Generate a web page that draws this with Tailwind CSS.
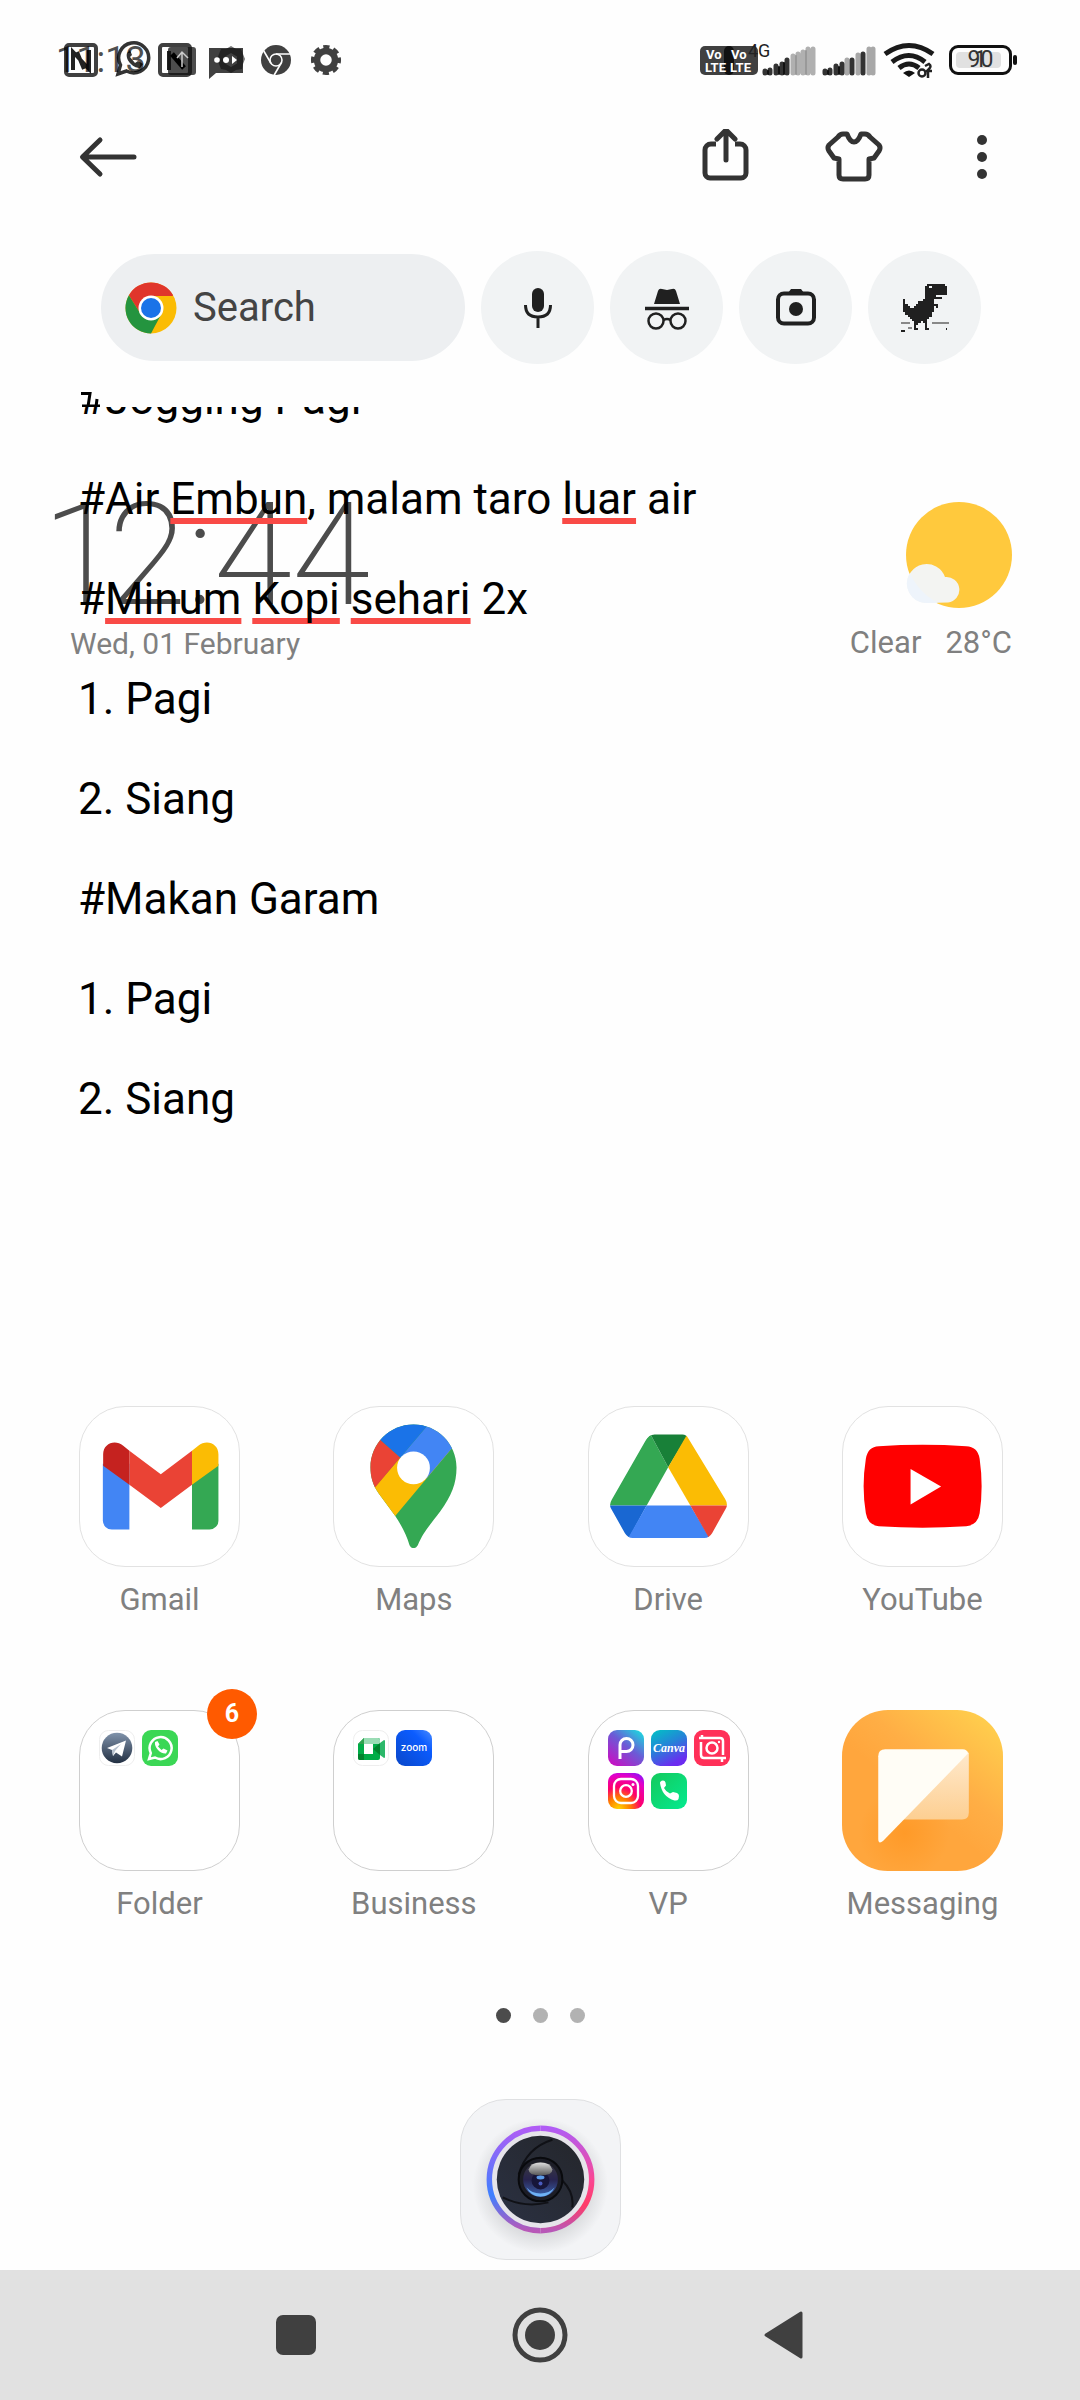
<!DOCTYPE html>
<html lang="id">
<head>
<meta charset="utf-8">
<meta name="viewport" content="width=device-width, initial-scale=1">
<title>Notes and home screen</title>
<script src="https://cdn.jsdelivr.net/npm/@tailwindcss/browser@4"></script>
</head>
<body class="bg-[#fefefe] font-['Roboto',sans-serif] text-black">
<div class="flex min-h-screen flex-col overflow-hidden">

  <!-- Status bar -->
  <header class="flex h-20 items-end justify-between pr-[68px] pl-14">
    <div class="relative flex h-10 items-center">
      <svg class="h-10 w-[290px]" viewBox="-2 0 290 40" aria-hidden="true">
        <g fill="none" stroke="#404040" stroke-width="4">
          <rect x="8" y="5" width="30" height="30" rx="3"/>
          <rect x="102" y="5" width="30" height="30" rx="3"/>
        </g>
        <g fill="none" stroke="#222" stroke-width="4">
          <path d="M15 30V12L31 29V10M19 12l7 17"/>
          <path d="M111 30V11"/>
        </g>
        <path d="M60 34l2.500-9a15 15 0 1 1 6 6z" fill="none" stroke="#333" stroke-width="3.500"/>
        <path d="M69 13c-2 6 5 15 13 15l3-4-5-3-3 2-5-6 2-2-2-5z" fill="#333"/>
        <rect x="110" y="7" width="28" height="28" rx="3" fill="#111" fill-opacity=".75"/>
        <path d="M114 14l12 14" stroke="#000" stroke-width="5"/>
        <path d="M124 27V13m-5 5l5-6 6 6" fill="none" stroke="#ccc" stroke-width="1.500"/>
        <path d="M151 8h34v25h-27l-7 6z" fill="#404040"/>
        <path d="M173 6l5 3h5l2 5 2 5-2 5-1 5-6 1-5 3-5-3-5-1-2-5-2-5 2-5 2-5h5z" fill="#111" fill-opacity=".6"/>
        <path d="M173 13l6 3.500v7l-6 3.500-6-3.500v-7z" fill="#404040"/>
        <g fill="#fff"><circle cx="159" cy="20" r="2.800"/><circle cx="168" cy="20" r="3"/><path d="M174 16l5 4-5 4z"/></g>
        <circle cx="218" cy="20" r="15" fill="#404040"/>
        <g fill="none" stroke="#fefefe" stroke-width="1.600"><circle cx="218" cy="20" r="6"/><path d="M218 14h14M212.800 23l-7-12M223.200 23l-7 12"/></g>
        <circle cx="268" cy="20" r="9" fill="none" stroke="#404040" stroke-width="6.500"/>
        <circle cx="268" cy="20" r="12.800" fill="none" stroke="#404040" stroke-width="4.500" stroke-dasharray="6 4.050" stroke-dashoffset="3"/>
      </svg>
      <span class="absolute left-0 text-[36px] leading-10 text-black/70">11:13</span>
    </div>
    <div class="flex h-10 items-center gap-[3px]">
      <svg class="h-10 w-[250px]" viewBox="0 0 250 40" aria-hidden="true">
        <rect x="4" y="6" width="58" height="29" rx="5" fill="#404040"/>
        <rect x="28" y="6" width="10" height="29" rx="5" fill="#111"/>
        <g fill="#fff" font-family="Roboto, sans-serif" font-weight="700" font-size="13">
          <text x="10" y="19">Vo</text><text x="35" y="19">Vo</text>
          <text x="9" y="32">LTE</text><text x="34" y="32">LTE</text>
        </g>
        <text x="52" y="17" font-family="Roboto, sans-serif" font-size="18" fill="#222">4G</text>
        <g stroke-linecap="round">
          <g stroke="#b0b0b0" stroke-width="5"><path d="M97 16v17M102 14v19M107 12v21M112 9v24M117 9v24"/></g>
          <g stroke="#999" stroke-width="2"><path d="M100 16v18M110 11v23"/></g>
          <g stroke="#333" stroke-width="5"><path d="M69 31v2M74 30v3M80 26v7M86 24v9M91 20v13"/></g>
          <g stroke="#111" stroke-width="2"><path d="M72 31v3M83 27v7M88 23v11"/></g>
        </g>
        <g stroke-linecap="round">
          <g stroke="#a8a8a8" stroke-width="5"><path d="M151 20v13M162 15v18M173 9v24M177 9v24"/></g>
          <g stroke="#333" stroke-width="5"><path d="M129 31v2M134 30v3M140 26v7M146 24v9M156 20v13M167 14v19"/></g>
          <g stroke="#111" stroke-width="2"><path d="M132 31v3M143 27v7"/></g>
        </g>
        <g fill="none" stroke="#1a1a1a" stroke-width="5">
          <path d="M189 14q24-17 48 0"/><path d="M196 22q17-13 33 0"/><path d="M203 28q10-8 20 0"/>
        </g>
        <path d="M207 33q6-5 12 0l-6 4z" fill="#111"/>
        <g fill="none" stroke="#222" stroke-width="2.500"><circle cx="226" cy="33" r="3.500"/><path d="M229 26l4-2q3 2 0 5l-2 2h5M232 38v-6"/></g>
      </svg>
      <div class="relative flex h-[30px] w-[63px] items-center justify-center rounded-[9px] border-[3px] border-[#111] text-[23px] leading-7 text-[#333]">
        <span class="absolute inset-x-1 inset-y-1 right-2 rounded-sm bg-[#e1e1e1]"></span>
        <span class="relative">90</span>
        <span class="absolute text-[23px]">1</span>
        <span class="absolute -right-2 h-[10px] w-1 rounded bg-[#111]"></span>
      </div>
    </div>
  </header>

  <!-- Note toolbar -->
  <nav class="flex h-[154px] items-center justify-between pr-[68px] pl-[78px] text-[#333]" aria-label="Note">
    <button type="button" aria-label="Back">
      <svg class="h-14 w-[60px]" viewBox="0 0 60 56" fill="none" stroke="currentColor" stroke-width="5" stroke-linecap="round" stroke-linejoin="round"><path d="M56 28H5M22 11L4.500 28 22 45"/></svg>
    </button>
    <div class="flex items-center gap-[68px]">
      <button type="button" aria-label="Share">
        <svg class="h-14 w-[60px]" viewBox="0 0 60 56" fill="none" stroke="currentColor" stroke-width="5" stroke-linecap="round" stroke-linejoin="round"><path d="M20 15h-5a6 6 0 0 0-6 6v23a5 5 0 0 0 5 5h31a5 5 0 0 0 5-5V21a6 6 0 0 0-6-6h-5" stroke-linecap="butt"/><path d="M30 31V2M21 10l9-9 9 9"/></svg>
      </button>
      <button type="button" aria-label="Theme">
        <svg class="h-14 w-[60px]" viewBox="0 0 60 56" fill="none" stroke="currentColor" stroke-width="5" stroke-linejoin="round"><path d="M19 5h4q3 8 7 8t7-8h4q3 0 5 3l9 8q2 3 0 6l-5 7-5 1v16q0 4-4 4H19q-4 0-4-4V30l-5-1-5-7q-2-3 0-6l9-8q2-3 5-3z"/></svg>
      </button>
      <button type="button" aria-label="More">
        <svg class="h-14 w-[60px]" viewBox="0 0 60 56" fill="currentColor"><circle cx="30" cy="11" r="5"/><circle cx="30" cy="28" r="5"/><circle cx="30" cy="45" r="5"/></svg>
      </button>
    </div>
  </nav>

  <!-- Browser search widget -->
  <section class="mt-[17px] flex items-center gap-4 pr-[99px] pl-[101px] text-[#202020]" aria-label="Search">
    <button type="button" class="flex h-[107px] flex-1 items-center gap-4 rounded-full bg-[#edeff1] pl-6 text-left text-[40px] leading-[52px] text-[#444]">
      <svg class="size-[52px]" viewBox="0 0 52 52" aria-hidden="true">
        <circle cx="26" cy="26" r="25.500" fill="#fbbc04"/>
        <path d="M26 26L15.600 32 3.900 13.200A25.500 25.500 0 0 1 48.100 13.200L47.500 14H26z" fill="#e0352b"/>
        <path d="M3.900 13.200L15.600 32 26 38 36.400 32 26 51.500A25.500 25.500 0 0 1 3.900 13.200z" fill="#24943f"/>
        <circle cx="26" cy="26" r="12.500" fill="#fff"/><circle cx="26" cy="26" r="10" fill="#1a73e8"/>
      </svg>
      <span>Search</span>
    </button>
    <button type="button" aria-label="Voice search" class="flex size-[113px] items-center justify-center rounded-full bg-[#f1f3f4]">
      <svg class="size-12" viewBox="0 0 48 48"><rect x="18" y="4" width="12" height="24" rx="6" fill="currentColor"/><path d="M11.500 21q0 12 12.500 12t12.500-12M24 33v11" fill="none" stroke="currentColor" stroke-width="3"/></svg>
    </button>
    <button type="button" aria-label="Incognito" class="flex size-[113px] items-center justify-center rounded-full bg-[#f1f3f4]">
      <svg class="size-12" viewBox="0 0 48 48"><path d="M11 20l4-13q1-3 4-2l5 1 5-1q3-1 4 2l4 13z" fill="currentColor"/><path d="M2 24.500h44" stroke="currentColor" stroke-width="3.500"/><g fill="none" stroke="currentColor" stroke-width="2.500"><circle cx="13" cy="37" r="7.500"/><circle cx="35" cy="37" r="7.500"/><path d="M20.500 36q3.500-2 7 0"/></g></svg>
    </button>
    <button type="button" aria-label="Lens" class="flex size-[113px] items-center justify-center rounded-full bg-[#f1f3f4]">
      <svg class="size-12" viewBox="0 0 48 48"><path d="M16 9l3-4h10l3 4z" fill="currentColor"/><rect x="6" y="9.500" width="36" height="30" rx="6" fill="none" stroke="currentColor" stroke-width="4"/><circle cx="24" cy="25" r="7" fill="currentColor"/></svg>
    </button>
    <button type="button" aria-label="Dino game" class="flex size-[113px] items-center justify-center rounded-full bg-[#f1f3f4]">
      <svg class="size-12" viewBox="-1 0 22 22" shape-rendering="crispEdges" stroke="currentColor" fill="none">
        <path d="M11 .5h8M10 1.500h2M13 1.500h7M10 2.500h10M10 3.500h10M10 4.500h10M10 5.500h5M10 6.500h8M0 7.500h1M9 7.500h5M0 8.500h1M7 8.500h7M0 9.500h2M6 9.500h10M0 10.500h3M5 10.500h9M15 10.500h1M0 11.500h14M0 12.500h14M1 13.500h12M2 14.500h11M3 15.500h9M4 16.500h7M5 17.500h3M9 17.500h2M5 18.500h2M10 18.500h1M5 19.500h1M10 19.500h1M5 20.500h2M10 20.500h2"/>
        <path d="M-1 18h4M13 18h8M2 20h2" stroke="#888"/><path d="M-1 21.500h2M19.500 20.800h.5"/>
      </svg>
    </button>
  </section>

  <!-- Note text, with the clock and weather widget sharing the same area -->
  <main class="mt-7 grid flex-1 content-start">
    <section class="col-start-1 row-start-1 flex items-start justify-between pt-[94px] pr-[68px] pl-[70px] text-[30px] leading-9 text-[#808080]" aria-label="Clock and weather">
      <div>
        <time class="-ml-6 block text-[142px] leading-[140px] font-extralight text-[#4c4c4c] proportional-nums">12:44</time>
        <p>Wed, 01 February</p>
      </div>
      <div class="flex flex-col items-end gap-[17px] pt-4">
        <svg class="size-[106px]" viewBox="0 0 106 106" aria-hidden="true"><circle cx="53" cy="53" r="53" fill="#ffc93d"/><path d="M20 101a19.500 19.500 0 1 1 19-26 12.500 12.500 0 1 1 3 25.500z" fill="#f3f4f2"/><path d="M4 71a19.500 19.500 0 0 0 16 30h12Q12 90 4 71z" fill="#eef4fb"/></svg>
        <p class="flex gap-6 text-[31px]"><span>Clear</span><span>28°C</span></p>
      </div>
    </section>
    <article class="z-10 col-start-1 row-start-1 px-[78px] text-[44px] leading-[100px]">
      <svg class="h-[15px] w-6" viewBox="0 0 24 15" fill="none" stroke="#000" stroke-width="3" aria-hidden="true"><path d="M3 1.500h9l-2 13M19 7l-1 8M4 14h18"/></svg>
      <div class="flex h-[42px] items-end overflow-hidden"><p>#Jogging Pagi</p></div>
      <p>#Air <span class="underline decoration-[#f94a46] decoration-[6px] underline-offset-[4px] [text-decoration-skip-ink:none]">Embun</span>, malam taro <span class="underline decoration-[#f94a46] decoration-[6px] underline-offset-[4px] [text-decoration-skip-ink:none]">luar</span> air</p>
      <p>#<span class="underline decoration-[#f94a46] decoration-[6px] underline-offset-[4px] [text-decoration-skip-ink:none]">Minum</span> <span class="underline decoration-[#f94a46] decoration-[6px] underline-offset-[4px] [text-decoration-skip-ink:none]">Kopi</span> <span class="underline decoration-[#f94a46] decoration-[6px] underline-offset-[4px] [text-decoration-skip-ink:none]">sehari</span> 2x</p>
      <p>1. Pagi</p>
      <p>2. Siang</p>
      <p>#Makan Garam</p>
      <p>1. Pagi</p>
      <p>2. Siang</p>
    </article>
  </main>

  <!-- App grid -->
  <section class="flex flex-col gap-[92px] pr-[77px] pl-[79px] text-[31px] leading-9 text-[#808080]" aria-label="Apps">
    <div class="flex justify-between">
      <a href="#" class="flex w-[161px] flex-col items-center gap-[15px]">
        <span class="size-[161px] rounded-[46px] border border-[#e2e2e2] bg-white">
          <svg viewBox="0 1 160 160" aria-hidden="true">
            <path d="M23 58h26.700v66.300H32a9 9 0 0 1-9-9z" fill="#4285f4"/>
            <path d="M112.700 70l26.600-12v57a9 9 0 0 1-9 9.300h-17.600z" fill="#34a853"/>
            <path d="M49.700 45l31.600 23.700L112.700 45v34.300l-31.400 23.400L49.700 79.300z" fill="#ea4335"/>
            <path d="M23.300 60V48.500C23.300 38 35 33 43.500 40l6.200 5v34.300z" fill="#c5221f"/>
            <path d="M139.300 60V48.500C139.300 38 127.600 33 119 40l-6.300 5v34.300z" fill="#fbbc04"/>
          </svg>
        </span>
        <span>Gmail</span>
      </a>
      <a href="#" class="flex w-[161px] flex-col items-center gap-[15px]">
        <span class="size-[161px] rounded-[46px] border border-[#e2e2e2] bg-white">
          <svg viewBox="0 1 160 160" aria-hidden="true">
            <clipPath id="pin"><path d="M80 18.700C104 18.700 123.300 38 123.300 62 123.300 78 118 91 107 106 94 123 90 127 84.300 140 82 144 78 144 76 140 73 130 68 120 61.300 110.300L45 88C39 80 36.700 71 36.700 62 36.700 38 56 18.700 80 18.700z"/></clipPath>
            <g clip-path="url(#pin)">
              <path d="M0 0h160v160H0z" fill="#34a853"/>
              <path d="M0 160L30 94.500 66.700 51.700 118 43.300 62 110.300 50 125z" fill="#fbbc04"/>
              <path d="M30 19.500L66.700 51.700 30 95.500z" fill="#ea4335"/>
              <path d="M92.700 21L100 0h60L118 43.300 93 73 66.700 51.700z" fill="#4285f4"/>
              <path d="M30 19.500V0h80L92.700 21 66.700 51.700z" fill="#1a73e8"/>
            </g>
            <circle cx="80" cy="62.300" r="16.500" fill="#fff"/>
          </svg>
        </span>
        <span>Maps</span>
      </a>
      <a href="#" class="flex w-[161px] flex-col items-center gap-[15px]">
        <span class="size-[161px] rounded-[46px] border border-[#e2e2e2] bg-white">
          <svg viewBox="0 1 160 160" aria-hidden="true">
            <clipPath id="drv"><path d="M66 28.700h28q4 0 6 4l37 61q3 5 1 9l-14 25q-3 5-8 5H44q-5 0-8-5L22 103q-2-4 1-9L58 33q2-4 8-4.300z"/></clipPath>
            <g clip-path="url(#drv)">
              <path d="M62 28.700L79.700 61.700 58 100H15V80z" fill="#34a853"/>
              <path d="M59.500 24h43L79.700 61.700z" fill="#188038"/>
              <path d="M98.700 28.700L145 100h-43L79.700 61.700z" fill="#fbbc04"/>
              <path d="M15 100h43l-20 37z" fill="#1967d2"/>
              <path d="M58 100h44l22 37H37z" fill="#4285f4"/>
              <path d="M102 100h43l-23 35z" fill="#ea4335"/>
            </g>
          </svg>
        </span>
        <span>Drive</span>
      </a>
      <a href="#" class="flex w-[161px] flex-col items-center gap-[15px]">
        <span class="size-[161px] rounded-[46px] border border-[#e2e2e2] bg-white">
          <svg viewBox="0 1 160 160" aria-hidden="true"><path d="M36 40.500Q80 37.500 124 40.500 135.500 41 137.500 53 141.500 81 137.500 108 135.500 120 124 121 80 124 36 121 25 120 23 108 18.500 81 23 53 25 41 36 40.500z" fill="#f00"/><path d="M68 63.300L98.700 81 68 99z" fill="#fff"/></svg>
        </span>
        <span>YouTube</span>
      </a>
    </div>

    <div class="flex justify-between">
      <a href="#" class="relative flex w-[161px] flex-col items-center gap-[15px]">
        <span class="grid size-[161px] grid-cols-[repeat(3,36px)] content-start gap-[7px] rounded-[46px] border border-[#cfcfcf] bg-white p-[19px]">
          <svg class="size-9" viewBox="0 0 36 36" aria-hidden="true"><defs><linearGradient id="tg" x2="0" y2="1"><stop stop-color="#8093ab"/><stop offset="1" stop-color="#222f42"/></linearGradient></defs><rect x=".5" y=".5" width="35" height="35" rx="9" fill="#fff" stroke="#eee"/><circle cx="18" cy="18" r="15.300" fill="url(#tg)"/><path d="M8 18l19-7.500-4 16-6-4-3 3.500-1-6z" fill="#fff"/><path d="M13 20l9-6-6 7-2 5z" fill="#b8c2cf"/></svg>
          <svg class="size-9" viewBox="0 0 36 36" aria-hidden="true"><rect width="36" height="36" rx="9" fill="#3bd755"/><path d="M7 29l1.800-6A11 11 0 1 1 13 27.500z" fill="none" stroke="#fff" stroke-width="2.500"/><path d="M13 12c-1 5 5 12 11 11.500l1.500-3-4-2-2 1.500-3.500-3.500 1.500-2-2-3.500z" fill="#fff"/></svg>
        </span>
        <span>Folder</span>
        <span class="absolute -top-[21px] left-32 flex size-[50px] items-center justify-center rounded-full bg-[#ff5a00] text-[25px] leading-7 font-bold text-white">6</span>
      </a>
      <a href="#" class="flex w-[161px] flex-col items-center gap-[15px]">
        <span class="grid size-[161px] grid-cols-[repeat(3,36px)] content-start gap-[7px] rounded-[46px] border border-[#cfcfcf] bg-white p-[19px]">
          <svg class="size-9" viewBox="0 0 36 36" aria-hidden="true"><rect x=".5" y=".5" width="35" height="35" rx="9" fill="#fff" stroke="#eee"/><path d="M11 8h14q2 0 2 2v18q0 2-2 2H7q-2 0-2-2V14z" fill="#00ac47"/><path d="M11 8h14q2 0 2 2v4H11z" fill="#9bdcb5"/><path d="M11 8v6H5z" fill="#31a350"/><path d="M5 24h6v6H7q-2 0-2-2z" fill="#00832d"/><path d="M11 14h9v10h-9z" fill="#fff"/><path d="M20 19l7-6v12z" fill="#00832d"/><path d="M27 13l4-3q1 0 1 1v16q0 1-1 1l-4-3z" fill="#2cb86a"/></svg>
          <svg class="size-9" viewBox="0 0 36 36" aria-hidden="true"><defs><linearGradient id="zm" x1="1" x2="0" y2="1"><stop stop-color="#4a8cff"/><stop offset=".3" stop-color="#0b5cff"/><stop offset="1" stop-color="#0a47c8"/></linearGradient></defs><rect width="36" height="36" rx="9" fill="url(#zm)"/><text x="18" y="21" text-anchor="middle" font-family="Inter, sans-serif" font-weight="500" font-size="10" fill="#fff">zoom</text></svg>
        </span>
        <span>Business</span>
      </a>
      <a href="#" class="flex w-[161px] flex-col items-center gap-[15px]">
        <span class="grid size-[161px] grid-cols-[repeat(3,36px)] content-start gap-[7px] rounded-[46px] border border-[#cfcfcf] bg-white p-[19px]">
          <svg class="size-9" viewBox="0 0 36 36" aria-hidden="true"><defs><linearGradient id="pa" x1="1" x2=".2" y2="1"><stop stop-color="#12e8e0"/><stop offset=".5" stop-color="#6b5bd6"/><stop offset="1" stop-color="#c412c4"/></linearGradient></defs><rect width="36" height="36" rx="9" fill="url(#pa)"/><path d="M12 29V15a6.500 6.500 0 1 1 6.500 6.500H13" fill="none" stroke="#fff" stroke-width="3"/></svg>
          <svg class="size-9" viewBox="0 0 36 36" aria-hidden="true"><defs><linearGradient id="cv" x2=".5" y2="1"><stop stop-color="#00c4c4"/><stop offset=".5" stop-color="#2484d8"/><stop offset="1" stop-color="#6b2cf0"/></linearGradient></defs><rect width="36" height="36" rx="9" fill="url(#cv)"/><text x="18" y="22" text-anchor="middle" font-family="Liberation Serif, serif" font-style="italic" font-weight="700" font-size="12" fill="#fff">Canva</text></svg>
          <svg class="size-9" viewBox="0 0 36 36" aria-hidden="true"><rect width="36" height="36" rx="9" fill="#ff3058"/><g fill="none" stroke="#fff" stroke-width="2.500"><path d="M5 8h21q3 0 3 3v14M8 5v4M7 12v13q0 3 3 3h22M28 28v4"/><circle cx="18" cy="18" r="5.500"/></g><circle cx="25" cy="12" r="1.200" fill="#fff"/></svg>
          <svg class="size-9" viewBox="0 0 36 36" aria-hidden="true"><defs><radialGradient id="ig" cx=".3" cy="1" r="1.100"><stop stop-color="#ffd600"/><stop offset=".3" stop-color="#ff7a00"/><stop offset=".55" stop-color="#ff0069"/><stop offset=".85" stop-color="#e400c8"/><stop offset="1" stop-color="#9a10f0"/></radialGradient></defs><rect width="36" height="36" rx="9" fill="url(#ig)"/><g fill="none" stroke="#fff" stroke-width="2.300"><rect x="6" y="6" width="24" height="24" rx="7"/><circle cx="18" cy="18" r="5.800"/></g><circle cx="25" cy="11.500" r="1.500" fill="#fff"/></svg>
          <svg class="size-9" viewBox="0 0 36 36" aria-hidden="true"><defs><linearGradient id="ph" x2="1" y2="1"><stop stop-color="#14c95c"/><stop offset="1" stop-color="#04ea90"/></linearGradient></defs><rect width="36" height="36" rx="9" fill="url(#ph)"/><path d="M9 10q0-2 3-2.500 2 0 2.500 2l.5 3-2 2.500q2 4 6 5.500l3-1.500 4 1q2 1 2 3l-.5 3q-1 2-4 1.500Q11 24 9 10z" fill="#fff"/></svg>
        </span>
        <span>VP</span>
      </a>
      <a href="#" class="flex w-[161px] flex-col items-center gap-[15px]">
        <span class="size-[161px] overflow-hidden rounded-[46px]">
          <svg viewBox="0 0 160 160" aria-hidden="true"><defs><linearGradient id="ms" x1="1" x2=".5" y2=".6"><stop stop-color="#ffd54f"/><stop offset=".7" stop-color="#ffae45"/><stop offset="1" stop-color="#ffa63d"/></linearGradient><radialGradient id="mg"><stop stop-color="#ff9a28"/><stop offset="1" stop-color="#ff9a28" stop-opacity="0"/></radialGradient><linearGradient id="mb" x2="0" y2="1"><stop stop-color="#ffe9cc"/><stop offset="1" stop-color="#fdcf92"/></linearGradient></defs><path d="M0 0h160v160H0z" fill="url(#ms)"/><circle cx="62" cy="122" r="45" fill="url(#mg)"/><path d="M126 42v60q0 6.700-6.700 6.700H58z" fill="url(#mb)"/><path d="M43 39h77q4 0 5.500 4L41 130q-5 4-5-2V46q0-7 7-7z" fill="#fffdf6"/></svg>
        </span>
        <span>Messaging</span>
      </a>
    </div>
  </section>

  <div class="mt-[86px] flex justify-center gap-[22px]" aria-hidden="true">
    <span class="size-[15px] rounded-full bg-[#4c4c4c]"></span>
    <span class="size-[15px] rounded-full bg-[#b2b2b2]"></span>
    <span class="size-[15px] rounded-full bg-[#b2b2b2]"></span>
  </div>

  <div class="mt-[76px] mb-[10px] flex justify-center">
    <a href="#" aria-label="Camera" class="size-[161px] rounded-[46px] border border-[#dfe0e2] bg-[#f3f4f6]">
      <svg viewBox="0 0 160 160" aria-hidden="true">
        <defs>
          <radialGradient id="sh"><stop offset=".6" stop-color="#9a9ca0" stop-opacity=".4"/><stop offset="1" stop-color="#9a9ca0" stop-opacity="0"/></radialGradient>
          <linearGradient id="r1" x2="0" y2="1"><stop stop-color="#b05cf5"/><stop offset=".65" stop-color="#3f80ff"/><stop offset="1" stop-color="#b858b8"/></linearGradient>
          <linearGradient id="r2" x2="0" y2="1"><stop stop-color="#b05cf5"/><stop offset=".5" stop-color="#fa4794"/><stop offset=".75" stop-color="#ff3c68"/><stop offset="1" stop-color="#b858b8"/></linearGradient>
          <linearGradient id="dk" x1="1" x2="0" y2="1"><stop stop-color="#24262b"/><stop offset="1" stop-color="#2b3142"/></linearGradient>
          <linearGradient id="ln" x2="0" y2="1"><stop stop-color="#3a3a3e"/><stop offset=".5" stop-color="#28244f"/><stop offset="1" stop-color="#3b62b0"/></linearGradient>
          <linearGradient id="gl" x2="0" y2="1"><stop stop-color="#ddd"/><stop offset="1" stop-color="#555"/></linearGradient>
        </defs>
        <circle cx="80" cy="86" r="68" fill="url(#sh)"/>
        <circle cx="80" cy="80" r="52" fill="#e6e4ea"/>
        <path d="M80 131.500a51.500 51.500 0 0 1 0-103" fill="none" stroke="url(#r1)" stroke-width="5.500"/>
        <path d="M80 28.500a51.500 51.500 0 0 1 0 103" fill="none" stroke="url(#r2)" stroke-width="5.500"/>
        <circle cx="80" cy="80" r="44" fill="url(#dk)"/>
        <path d="M58 75Q66 48 92 40M102 81q12 12 10 27M88 103q-24 6-46-5" fill="none" stroke="#101116" stroke-width="2"/>
        <circle cx="80" cy="80" r="22" fill="#1c1d26" stroke="#090a0d" stroke-width="2"/>
        <circle cx="80" cy="80" r="17.500" fill="url(#ln)"/>
        <path d="M66 88q4 9 14 9t14-9q-5 6-14 6t-14-6z" fill="#6fb2f5"/>
        <circle cx="80" cy="81" r="9" fill="#17163a"/>
        <path d="M68 70q2-7 12-7t12 7q0 6-12 6t-12-6z" fill="url(#gl)"/>
        <ellipse cx="80" cy="78" rx="4" ry="2" fill="#5c9be8"/><circle cx="80" cy="84" r="2" fill="#4a5cc0"/>
      </svg>
    </a>
  </div>

  <!-- System navigation -->
  <nav class="flex h-[130px] items-center justify-center gap-[188px] bg-[#e1e1e1] text-[#404040]" aria-label="System">
    <button type="button" aria-label="Recents"><svg class="size-14" viewBox="0 0 56 56"><rect x="8" y="8" width="40" height="40" rx="7" fill="currentColor"/></svg></button>
    <button type="button" aria-label="Home"><svg class="size-14" viewBox="0 0 56 56"><circle cx="28" cy="28" r="25" fill="none" stroke="currentColor" stroke-width="5"/><circle cx="28" cy="28" r="15" fill="currentColor"/></svg></button>
    <button type="button" aria-label="Back"><svg class="size-14" viewBox="0 0 56 56"><path d="M45 6v44L10 28z" fill="currentColor" stroke="currentColor" stroke-width="3" stroke-linejoin="round"/></svg></button>
  </nav>
</div>
</body>
</html>
